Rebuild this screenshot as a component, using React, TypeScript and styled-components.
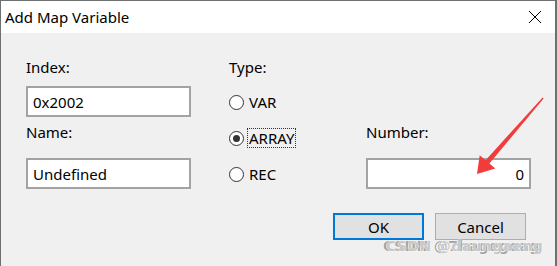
import React from "react";
import styled, { createGlobalStyle } from "styled-components";

const GlobalStyle = createGlobalStyle`
  html, body {
    margin: 0;
    padding: 0;
    background: #f0f0f0;
  }
  body {
    font-family: "Noto Sans", "Open Sans", Arial, sans-serif;
    color: #000;
  }
`;

const Window = styled.div`
  position: relative;
  width: 557px;
  height: 266px;
  box-sizing: border-box;
  border-top: 1px solid #6f6f6f;
  border-left: 1px solid #6f6f6f;
  border-right: 2px solid #6f6f6f;
  background: #f0f0f0;
  overflow: hidden;
  display: flex;
  flex-direction: column;
`;

const TitleBar = styled.div`
  height: 32px;
  background: #ffffff;
  display: flex;
  align-items: center;
  justify-content: space-between;
  padding: 0 13px 0 4px;
`;

const Title = styled.div`
  font-size: 15px;
  line-height: 18px;
  margin-top: -1px;
`;

const CloseButton = styled.div`
  width: 14px;
  height: 14px;
  display: flex;
  margin-top: -1px;
`;

const Body = styled.div`
  flex: 1;
  padding: 25px 24px 0 25px;
  font-size: 15px;
`;

const Fields = styled.div`
  display: grid;
  grid-template-columns: 165px 99px 165px;
  column-gap: 38px;
`;

const Column = styled.div`
  display: flex;
  flex-direction: column;
`;

const Label = styled.div<{ $top?: number }>`
  height: 18px;
  line-height: 18px;
  margin-top: ${(p) => p.$top ?? 0}px;
`;

const TextBox = styled.div<{ $top: number; $right?: boolean }>`
  box-sizing: border-box;
  height: 31px;
  margin-top: ${(p) => p.$top}px;
  background: #ffffff;
  border: 2px solid #a3a3a3;
  display: flex;
  align-items: center;
  justify-content: ${(p) => (p.$right ? "flex-end" : "flex-start")};
  padding: 0 5px;
  font-size: 15px;
`;

const RadioRow = styled.div<{ $top: number }>`
  display: flex;
  align-items: center;
  height: 20px;
  margin-top: ${(p) => p.$top}px;
`;

const RadioCircle = styled.span<{ $checked?: boolean }>`
  box-sizing: border-box;
  width: 15px;
  height: 15px;
  border-radius: 50%;
  border: 1.5px solid #333;
  background: #fff;
  display: flex;
  align-items: center;
  justify-content: center;
  margin-right: 3px;
  &::after {
    content: "";
    display: ${(p) => (p.$checked ? "block" : "none")};
    width: 7px;
    height: 7px;
    border-radius: 50%;
    background: #333;
  }
`;

const RadioText = styled.span<{ $focused?: boolean }>`
  line-height: 18px;
  padding: 0 1px;
  border: 1px dotted ${(p) => (p.$focused ? "#333" : "transparent")};
`;

const ButtonRow = styled.div`
  display: flex;
  justify-content: flex-end;
  gap: 11px;
  margin-top: 24px;
  padding-right: 5px;
`;

const Button = styled.div<{ $default?: boolean }>`
  box-sizing: border-box;
  width: 91px;
  height: 27px;
  background: #e1e1e1;
  border: ${(p) => (p.$default ? "2px solid #0078d7" : "1px solid #adadad")};
  display: flex;
  align-items: center;
  justify-content: center;
  font-size: 15px;
`;

const Watermark = styled.div`
  position: absolute;
  left: 382px;
  top: 237px;
  font-family: "DejaVu Sans", sans-serif;
  font-size: 14px;
  font-weight: bold;
  letter-spacing: 0.4px;
  color: rgba(110, 110, 110, 0.65);
  text-shadow: 0 0 1px #fff, 0 0 1px #fff;
  white-space: nowrap;
`;

const WatermarkGhost = styled.span`
  position: absolute;
  left: 3px;
  top: 0;
  color: rgba(130, 130, 130, 0.45);
`;

const ArrowLayer = styled.svg`
  position: absolute;
  left: 0;
  top: 0;
  pointer-events: none;
`;

export default function App() {
  return (
    <>
      <GlobalStyle />
      <Window>
        <TitleBar>
          <Title>Add Map Variable</Title>
          <CloseButton>
            <svg width="14" height="14" viewBox="0 0 14 14">
              <path d="M1 1 L13 13 M13 1 L1 13" stroke="#000" strokeWidth="1" fill="none" />
            </svg>
          </CloseButton>
        </TitleBar>
        <Body>
          <Fields>
            <Column>
              <Label>Index:</Label>
              <TextBox $top={10}>0x2002</TextBox>
              <Label $top={6}>Name:</Label>
              <TextBox $top={17}>Undefined</TextBox>
            </Column>
            <Column>
              <Label>Type:</Label>
              <RadioRow $top={16}>
                <RadioCircle />
                <RadioText>VAR</RadioText>
              </RadioRow>
              <RadioRow $top={16}>
                <RadioCircle $checked />
                <RadioText $focused>ARRAY</RadioText>
              </RadioRow>
              <RadioRow $top={16}>
                <RadioCircle />
                <RadioText>REC</RadioText>
              </RadioRow>
            </Column>
            <Column>
              <Label $top={65}>Number:</Label>
              <TextBox $top={17} $right>
                0
              </TextBox>
            </Column>
          </Fields>
          <ButtonRow>
            <Button $default>OK</Button>
            <Button>Cancel</Button>
          </ButtonRow>
        </Body>
        <Watermark>
          CSDN @7hagegoag
          <WatermarkGhost>CSDN @daungaeng</WatermarkGhost>
        </Watermark>
        <ArrowLayer width="557" height="266" viewBox="0 0 557 266">
          <polygon
            points="541.6,96.4 542.6,97.4 488.4,162.5 494.3,167.6 476,173 478.7,154.2 484.6,159.3"
            fill="#f23b3b"
          />
        </ArrowLayer>
      </Window>
    </>
  );
}
